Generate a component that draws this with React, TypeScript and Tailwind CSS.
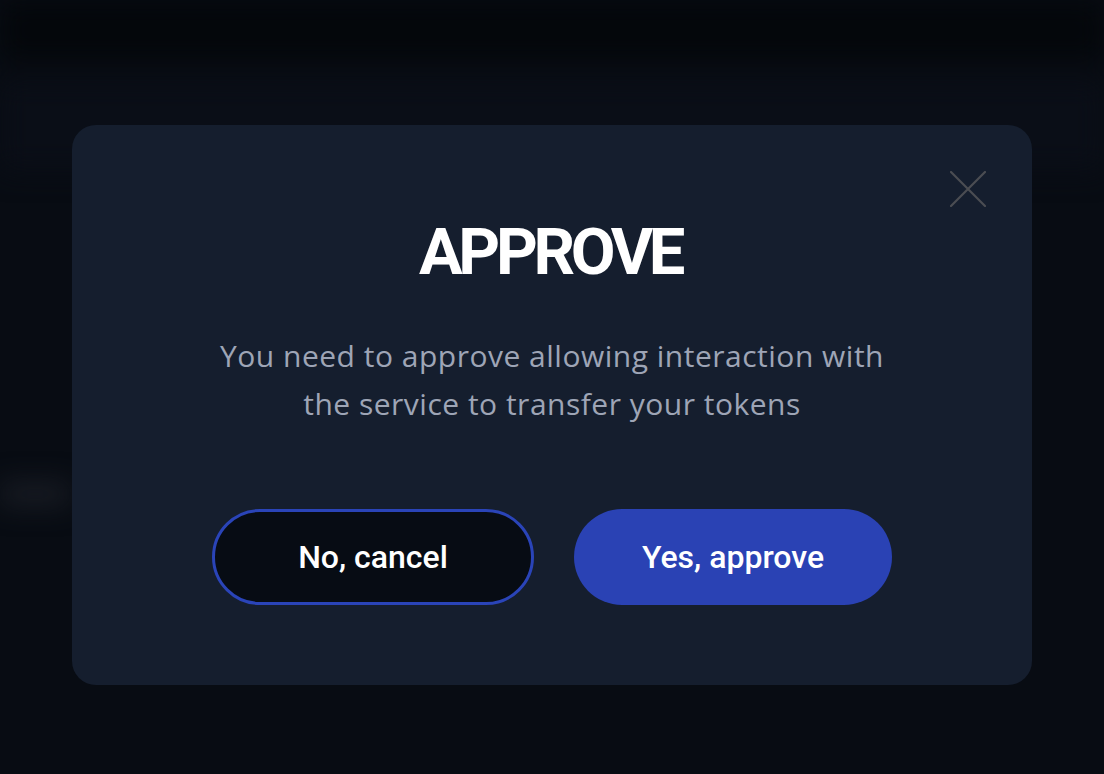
import React from "react";

export default function App() {
  return (
    <div className="relative h-[774px] w-[1104px] overflow-hidden bg-[#080c13]" style={{ fontFamily: "Roboto, 'Open Sans', sans-serif" }}>
      {/* blurred page behind */}
      <div className="absolute inset-0 flex flex-col blur-[14px]">
        <div className="h-[60px] bg-[#04070b]" />
        <div className="flex flex-1 flex-col gap-6 pt-[20px]">
          <div className="h-[90px] bg-[#0a0e17]" />
          <div className="flex items-center pt-[290px]">
            <div className="h-[20px] w-[70px] rounded bg-[#1c1f27]" />
          </div>
        </div>
      </div>
      <div className="relative flex justify-center pt-[125px]">
        <div className="relative flex h-[560px] w-[960px] flex-col items-center rounded-[24px] bg-[#151e2e] pt-[87px]">
          <button className="absolute right-[46px] top-[46px] h-[36px] w-[36px]">
            <svg viewBox="0 0 36 36" className="h-[36px] w-[36px]" fill="none" stroke="#4b4d52" strokeWidth="2.2" strokeLinecap="round">
              <path d="M1 1 L35 35 M35 1 L1 35" />
            </svg>
          </button>
          <h1 className="mr-[4px] text-[65px] font-bold leading-[80px] tracking-[-4.3px] text-white">APPROVE</h1>
          <p
            className="mt-[40px] w-[690px] text-center text-[30px] font-normal leading-[48px] tracking-[0.5px] text-[#9ea5b6]"
            style={{ fontFamily: "'Open Sans', sans-serif" }}
          >
            You need to approve allowing interaction with the service to transfer your tokens
          </p>
          <div className="mt-[81px] flex gap-[40px]">
            <button className="flex h-[96px] w-[322px] items-center justify-center rounded-full border-[3px] border-[#2a44b8] bg-[#070c14] text-[32px] font-medium text-white">
              No, cancel
            </button>
            <button className="flex h-[96px] w-[318px] items-center justify-center rounded-full bg-[#2a42b4] text-[32px] font-medium text-white">
              Yes, approve
            </button>
          </div>
        </div>
      </div>
    </div>
  );
}
